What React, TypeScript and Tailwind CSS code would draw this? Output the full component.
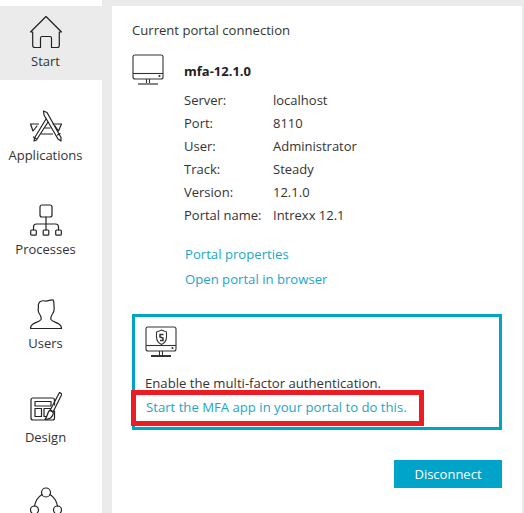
const rows = [
  ["Server:", "localhost"],
  ["Port:", "8110"],
  ["User:", "Administrator"],
  ["Track:", "Steady"],
  ["Version:", "12.1.0"],
  ["Portal name:", "Intrexx 12.1"],
];

function NavItem({ label, active, children }: { label?: string; active?: boolean; children: React.ReactNode }) {
  return (
    <div className={`flex w-full shrink-0 flex-col items-center ${active ? "h-[74px] bg-[#ebebeb] pt-[10px]" : "h-[94px] pt-[30px]"}`}>
      <svg className="mr-[11px] h-[32px] w-[32px] text-[#222]" viewBox="0 0 32 32" fill="none" stroke="currentColor" strokeWidth="1.2" strokeLinejoin="round" strokeLinecap="round" aria-hidden="true">
        {children}
      </svg>
      {label ? <span className="mt-[4px] mr-[11px] text-[13px] leading-[18px] text-[#333]">{label}</span> : null}
    </div>
  );
}

function Monitor({ shield }: { shield?: boolean }) {
  return (
    <svg className="h-[32px] w-[32px] text-[#333]" viewBox="0 0 32 32" fill="none" stroke="currentColor" strokeWidth="1.1" aria-hidden="true">
      <rect x="1" y="1" width="30" height="24" rx="2" />
      <path d="M1 19.500H31" />
      <path d="M14.500 25V29M17.500 25V29" />
      <path d="M6 30H26" strokeWidth={shield ? 2 : 1.2} />
      <circle cx="27.500" cy="22" r="0.500" fill="currentColor" />
      {shield ? (
        <>
          <path d="M16.500 4L21.500 6V11C21.500 14 19.500 17 16.500 18.500C13.500 17 11.500 14 11.500 11V6Z" />
          <path d="M18.500 8.500H15V11L18 12V14.500H15" strokeWidth="1.500" />
        </>
      ) : null}
    </svg>
  );
}

export default function App() {
  return (
    <div className="flex h-[513px] w-[524px] overflow-hidden bg-[#ebebeb] font-['Open_Sans',sans-serif] text-[13px] text-[#333]">
      <aside className="flex h-full w-[102px] shrink-0 flex-col overflow-hidden bg-white pt-[6px]">
        <NavItem label="Start" active>
          <path d="M16 0.500L0.500 16H2.700V29.500C2.700 30.800 3.500 31.500 4.700 31.500H10.500V22C10.500 21 11.200 20.500 12 20.500H20C20.800 20.500 21.500 21 21.500 22V31.500H27.300C28.500 31.500 29.300 30.800 29.300 29.500V16H31.500Z" />
        </NavItem>
        <NavItem label="Applications">
          <path d="M13.500 1L17 2.500L31 27.500L31 31L28 29L14 5Z" />
          <path d="M16 9L4.500 28L4 31L6.500 30L18 12" />
          <path d="M3.500 27L6.500 29M27.500 25L30 23.500" />
          <path d="M15 18H20M11.500 24H22.500" />
          <path d="M8.500 14H0.500L3 21L7 16M23 14H31.500L28.500 21L25 16" />
        </NavItem>
        <NavItem label="Processes">
          <rect x="10" y="1" width="12" height="12" rx="2" />
          <path d="M16 13V26M3.500 26V23C3.500 21 4.500 20 6.500 20H25.500C27.500 20 28.500 21 28.500 23V26" />
          <rect x="0.700" y="26" width="5.600" height="5.200" rx="1" />
          <rect x="13.200" y="26" width="5.600" height="5.200" rx="1" />
          <rect x="25.700" y="26" width="5.600" height="5.200" rx="1" />
        </NavItem>
        <NavItem label="Users">
          <path d="M9 5C10 3 13 2.500 15 3C18 3.500 21 1 23 2C24 3 24 5 24 8C24.500 11 24 14 22.500 16C21 18 20.500 20 21 21.500C22 23.500 27 24.500 29 26C30.500 27 31.500 29 31.500 30.500H0.500C0.500 29 1.500 27 3 26C5 24.500 10 23.500 11 21.500C11.500 20 11 18 9.500 16C8 14 8 11 8.500 9C8 7.500 8.500 6 9 5Z" />
        </NavItem>
        <NavItem label="Design">
          <path d="M24.500 13V8C24.500 6.800 23.700 6 22.500 6H3C1.800 6 1 6.800 1 8V26C1 27.200 1.800 28 3 28H22.500C23.700 28 24.500 27.200 24.500 26V19" />
          <path d="M5 9.500H21V14H5Z" />
          <path d="M5 16.500H11.500V24.500H5Z" />
          <path d="M14 24.500V16.500H20.500M14 24.500H16" />
          <path d="M29.500 0.500L32 2L23 20L20 18.500Z" />
          <path d="M19.500 18.500C22 18 24 20 23 22.500C22 25.500 19 27.500 15 27.500C17.500 25 17 21 19.500 18.500Z" />
        </NavItem>
        <NavItem>
          <circle cx="16" cy="6.500" r="4.500" />
          <circle cx="4.500" cy="24" r="4" />
          <circle cx="27.500" cy="24" r="4" />
          <path d="M12 8.500C8 11 5.500 15 4.500 20M20 8.500C24 11 26.500 15 27.500 20" />
        </NavItem>
      </aside>

      <main className="mt-[6px] ml-[10px] flex w-[410px] shrink-0 flex-col bg-white pl-[20px] pr-[20px]">
        <h1 className="mt-[15px] text-[13.100px] leading-[18px] font-normal">Current portal connection</h1>

        <div className="mt-[15px] flex">
          <Monitor />
          <div className="ml-[20px] flex flex-col">
            <p className="mt-[8px] text-[13px] leading-[18px] font-bold text-[#222]">mfa-12.1.0</p>
            <div className="mt-[8px] flex flex-col">
              {rows.map(([k, v]) => (
                <div key={k} className="flex h-[23px] items-center leading-[18px]">
                  <span className="w-[89px]">{k}</span>
                  <span>{v}</span>
                </div>
              ))}
            </div>
            <div className="mt-[19px] ml-px flex flex-col gap-[7px] text-[13.150px] leading-[18px] text-[#1ba5c9]">
              <a>Portal properties</a>
              <a>Open portal in browser</a>
            </div>
          </div>
        </div>

        <section className="relative mt-[26px] h-[116px] w-[370px] border-[3px] border-[#00a4c9] pt-[9px] pl-[10px]">
          <Monitor shield />
          <p className="mt-[16px] text-[13.150px] leading-[18px]">Enable the multi-factor authentication.</p>
          <p className="mt-[6px] ml-px text-[13.150px] leading-[18px] text-[#1ba5c9]">Start the MFA app in your portal to do this.</p>
          <div className="absolute top-[73px] left-[-4px] h-[36px] w-[293px] border-[5px] border-[#ed1c24]" />
        </section>

        <div className="mt-[30px] flex justify-end">
          <button className="h-[28px] w-[108px] bg-[#00a4c9] pt-[2px] text-[13px] text-white">Disconnect</button>
        </div>
      </main>
    </div>
  );
}
